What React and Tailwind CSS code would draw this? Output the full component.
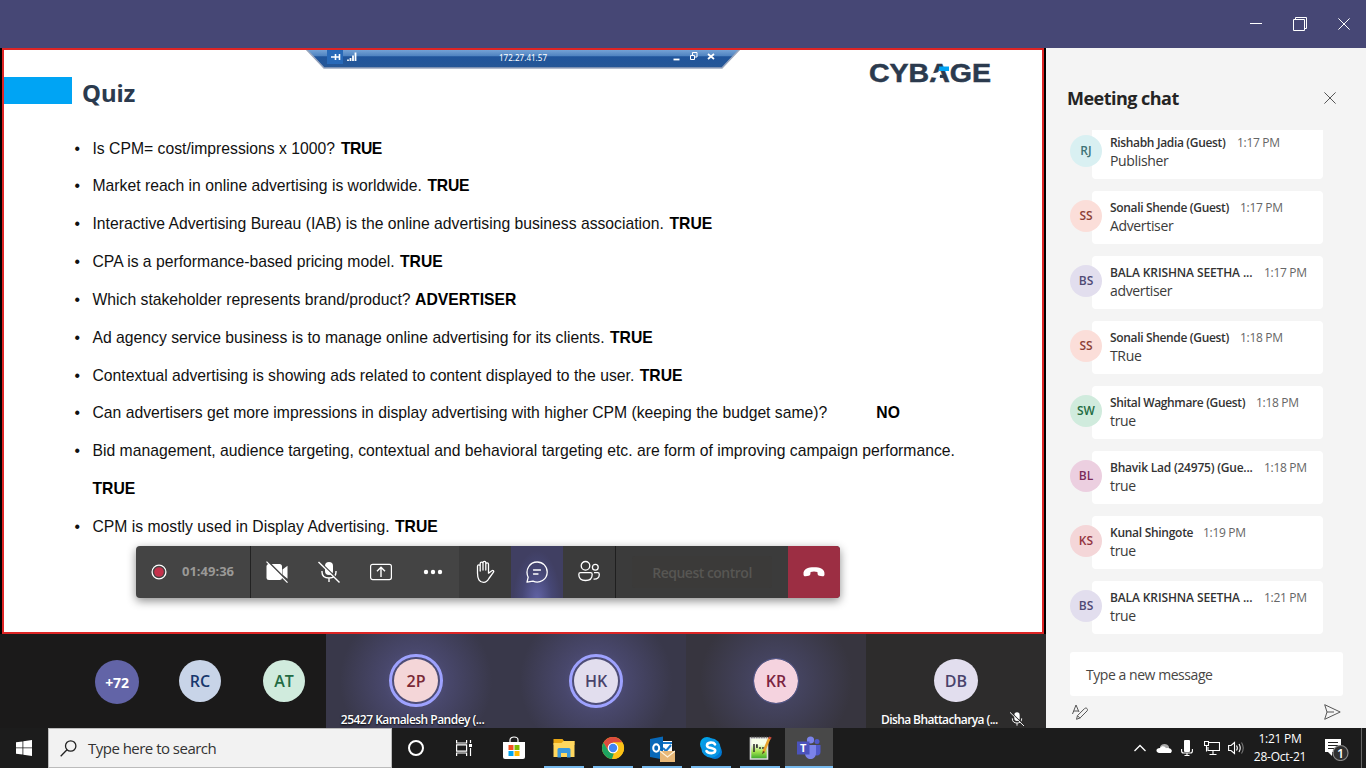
import React from "react";

const QUIZ = [
  ["Is CPM= cost/impressions x 1000?", "TRUE", "ml-[6px] tracking-[-0.5px]"],
  ["Market reach in online advertising is worldwide.", "TRUE", "ml-[5.500px] tracking-[-0.2px]"],
  ["Interactive Advertising Bureau (IAB) is the online advertising business association.", "TRUE", "ml-[5.500px]"],
  ["CPA is a performance-based pricing model.", "TRUE", "ml-[5.500px]"],
  ["Which stakeholder represents brand/product?", "ADVERTISER", "ml-[4.500px]"],
  ["Ad agency service business is to manage online advertising for its clients.", "TRUE", "ml-[5.500px]"],
  ["Contextual advertising is showing ads related to content displayed to the user.", "TRUE", "ml-[5.500px]"],
  ["Can advertisers get more impressions in display advertising with higher CPM (keeping the budget same)?", "NO", "ml-[49px]"],
  ["Bid management, audience targeting, contextual and behavioral targeting etc. are form of improving campaign performance.", "TRUE", "block"],
  ["CPM is mostly used in Display Advertising.", "TRUE", "ml-[5.500px]"],
];

const CHAT = [
  ["RJ", "Rishabh Jadia (Guest)", "1:17 PM", "Publisher", "bg-[#d9f0f2] text-[#3f7376]", "w-[116px] tracking-[-0.34px]"],
  ["SS", "Sonali Shende (Guest)", "1:17 PM", "Advertiser", "bg-[#fbded9] text-[#8d4237]", "w-[119px] tracking-[-0.34px]"],
  ["BS", "BALA KRISHNA SEETHA ...", "1:17 PM", "advertiser", "bg-[#e2deee] text-[#4f4a75]", "w-[143px] tracking-[-0.12px]"],
  ["SS", "Sonali Shende (Guest)", "1:18 PM", "TRue", "bg-[#fbded9] text-[#8d4237]", "w-[119px] tracking-[-0.34px]"],
  ["SW", "Shital Waghmare (Guest)", "1:18 PM", "true", "bg-[#d0ebdd] text-[#236b43]", "w-[135px] tracking-[-0.36px]"],
  ["BL", "Bhavik Lad (24975) (Gue...", "1:18 PM", "true", "bg-[#eccfe0] text-[#7b2b5a]", "w-[143px] tracking-[-0.22px]"],
  ["KS", "Kunal Shingote", "1:19 PM", "true", "bg-[#f4d6d8] text-[#933540]", "w-[82px] tracking-[-0.28px]"],
  ["BS", "BALA KRISHNA SEETHA ...", "1:21 PM", "true", "bg-[#e2deee] text-[#4f4a75]", "w-[143px] tracking-[-0.12px]"],
];

function Message({ m }) {
  return (
    <div className="flex h-[65px] shrink-0">
      <div className={`relative z-10 mt-[18px] flex h-8 w-8 shrink-0 items-center justify-center rounded-full text-[12px] font-semibold ${m[4]}`}>{m[0]}</div>
      <div className="-ml-[10px] mt-[9px] h-[53px] w-[231px] rounded-[4px] bg-white pl-[18px] pt-[8px] whitespace-nowrap">
        <div className="flex h-[18px] items-center text-[12px] leading-[18px]">
          <span className={`shrink-0 font-semibold text-[#333] ${m[5]}`}>{m[1]}</span>
          <span className="ml-[11px] tracking-[-0.3px] text-[#666]">{m[2]}</span>
        </div>
        <div className="h-5 text-[14px] leading-[17px] tracking-[-0.35px] text-[#3b3b3b]">{m[3]}</div>
      </div>
    </div>
  );
}

const MicOff = ({ className, cut = "#444" }) => (
  <svg className={className} viewBox="0 0 24 24" fill="none" stroke="#fff" strokeWidth="1.4">
    <rect x="8" y="2" width="8" height="13" rx="4" fill="#fff" stroke="none" />
    <path d="M5 11v1c0 4 3 6 7 6s7-2 7-6v-1M12 18v4" />
    <path d="M2.700 1.800l20 19.500" stroke={cut} strokeWidth="1.800" />
    <path d="M1.5 2l21 20.5" />
  </svg>
);

function Toolbar() {
  return (
    <div className="absolute left-[136px] top-[498px] z-20 flex h-[52px] w-[704px] overflow-hidden rounded-[4px] bg-[#444] shadow-[0_3px_10px_rgba(0,0,0,0.45)]">
      <div className="flex w-[115px] items-center border-r border-[#222] pl-[15px]">
        <svg className="h-4 w-4" viewBox="0 0 16 16"><circle cx="8" cy="8" r="6.9" fill="none" stroke="#fff" strokeWidth="1.3" /><circle cx="8" cy="8" r="4.8" fill="#c4314b" /></svg>
        <span className="ml-[15px] text-[13px] font-bold text-[#9a9997]">01:49:36</span>
      </div>
      <div className="flex w-[208px]">
        <div className="flex w-[52px] items-center justify-center">
          <svg className="h-6 w-6" viewBox="0 0 24 24"><rect x="1.500" y="4" width="15.500" height="16" rx="2.5" fill="#fff" /><path d="M17.5 9.5l5-3.700v13l-5-4z" fill="#fff" /><path d="M2.600 1.100l21 21" stroke="#444" strokeWidth="1.600" /><path d="M1.5 1.700l21 21" stroke="#fff" strokeWidth="1.2" /></svg>
        </div>
        <div className="flex w-[52px] items-center justify-center"><MicOff className="h-6 w-6" /></div>
        <div className="flex w-[52px] items-center justify-center">
          <svg className="h-6 w-6" viewBox="0 0 24 24" fill="none" stroke="#fff" strokeWidth="1.2"><rect x="1.6" y="4.4" width="20.8" height="15.2" rx="2" /><path d="M12 17V7.5M8 11.3l4-4 4 4" strokeWidth="1.4" /></svg>
        </div>
        <div className="flex w-[52px] items-center justify-center">
          <svg className="h-6 w-6" viewBox="0 0 24 24" fill="#fff"><circle cx="5" cy="12" r="2.200" /><circle cx="12" cy="12" r="2.200" /><circle cx="19" cy="12" r="2.200" /></svg>
        </div>
      </div>
      <div className="flex w-[157px] border-r border-[#1f1f1f] bg-[#3b3b3b]">
        <div className="flex w-[52px] items-center justify-center">
          <svg className="h-6 w-6" viewBox="0 0 24 24" fill="none" stroke="#fff" strokeWidth="1.3" strokeLinecap="round" strokeLinejoin="round"><path d="M4.5 13V6.2c0-1.8 2.7-1.8 2.7 0V11M7.2 10V3.4c0-1.8 2.8-1.8 2.8 0V10M10 9V2.8c0-1.8 2.8-1.8 2.8 0V10M12.8 10V4.2c0-1.7 2.7-1.7 2.7 0v9l3.4-2.5c1.2-.8 2.4.4 1.6 1.5l-4.6 6.3c-1.3 2.6-2.9 3.8-5.3 3.8-4.3 0-6.1-3.5-6.1-9.3" /></svg>
        </div>
        <div className="flex w-[52px] items-center justify-center bg-[radial-gradient(ellipse_at_50%_105%,#6264a7_0%,#464775_40%,#403f62_65%)]">
          <svg className="h-6 w-6" viewBox="0 0 24 24" fill="none" stroke="#fff" strokeWidth="1.3" strokeLinecap="round" strokeLinejoin="round"><path d="M2 22.2l1.2-5C-.4 9.600 5 2 12.200 2c5.600 0 10 4.400 10 10 0 7.700-7.700 12-14.200 9.100zM8.500 10h7M8.500 14h4.500" /></svg>
        </div>
        <div className="flex w-[52px] items-center justify-center">
          <svg className="h-6 w-6" viewBox="0 0 24 24" fill="none" stroke="#fff" strokeWidth="1.3"><circle cx="8.500" cy="5.800" r="4.300" /><circle cx="18.300" cy="7.300" r="2.900" /><path d="M3.500 12.700h10c1 0 1.700.7 1.700 1.700 0 4-2.200 6.100-6.700 6.100s-6.700-2.100-6.700-6.100c0-1 .7-1.700 1.700-1.700zM17 12.700h3.700c1 0 1.600.7 1.600 1.700 0 3.300-1.900 5-5.800 4.700" /></svg>
        </div>
      </div>
      <div className="flex w-[172px] items-center justify-center bg-[#3b3b3b]">
        <div className="flex h-8 w-[140px] items-center justify-center rounded-[3px] bg-[#3b3a39] text-[14px] font-semibold tracking-[-0.5px] text-[#575653]">Request control</div>
      </div>
      <div className="flex w-[52px] items-center justify-center bg-[#9c2e43]">
        <svg className="h-6 w-6" viewBox="0 0 24 24"><path d="M1.500 14.500C1 8.900 6 7.300 12 7.300s11 1.600 10.500 7.200c-.1 1.500-.9 1.900-2.200 1.700l-3-.5c-1.200-.2-1.600-1-1.700-2l-.2-1.800c-2.400-.7-4.400-.7-6.800 0l-.2 1.800c-.1 1-.5 1.800-1.700 2l-3 .5c-1.300.2-2.100-.2-2.200-1.700z" fill="#fff" /></svg>
      </div>
    </div>
  );
}

function Slide() {
  return (
    <div className="relative ml-[2px] h-[586px] w-[1042px] overflow-hidden border-2 border-[#dd2525] bg-white">
      <div className="flex h-[20px] justify-center">
        <svg className="-ml-[1px] h-[20px] w-[440px] shrink-0" viewBox="0 0 440 20">
          <defs><linearGradient id="rdp" x1="0" y1="0" x2="0" y2="1"><stop offset="0" stopColor="#7ba7d8" /><stop offset=".38" stopColor="#4e82c0" /><stop offset=".4" stopColor="#20559c" /><stop offset="1" stopColor="#265796" /></linearGradient></defs>
          <path d="M3 -1h434l-18 19H21z" fill="url(#rdp)" stroke="#9aa6bd" strokeWidth="1.500" />
          <rect x="24" y="0" width="16" height="14" fill="#2869b8" />
          <path d="M28 7h4M32.500 4v6M32.500 7h4M36.500 4v6" stroke="#fff" strokeWidth="1.600" fill="none" />
          <path d="M45 11V9.500M47.500 11V8M50 11V5.500M52.500 11V2.500" stroke="#fff" strokeWidth="1.800" />
          <text x="220" y="11" textAnchor="middle" fill="#fff" fontSize="9" textLength="48" lengthAdjust="spacingAndGlyphs" fontFamily="Noto Sans">172.27.41.57</text>
          <path d="M370.500 9.500h6" stroke="#fff" strokeWidth="1.800" />
          <path d="M387.500 5.500h4v4h-4zM389.500 5V2.500h4.500v4.500h-2" stroke="#fff" fill="none" />
          <path d="M405 4l6 5M411 4l-6 5" stroke="#fff" strokeWidth="1.800" />
        </svg>
      </div>
      <div className="flex h-[65px]">
        <div className="mt-[7px] h-[27px] w-[68px] bg-[#00a4f4]" />
        <h1 className="ml-[10px] mt-[5px] font-['Noto_Sans','Open_Sans',sans-serif] text-[24px] font-bold leading-[36px] tracking-[-0.1px] text-[#2b3a4e]">Quiz</h1>
        <svg className="-mt-[10px] ml-auto mr-[48px] h-[26px] w-[127px]" viewBox="0 0 127 26">
          <text x="2" y="21.500" fontFamily="Liberation Sans" fontWeight="700" fontSize="25" textLength="122" lengthAdjust="spacingAndGlyphs" fill="#2b3a4e" stroke="#2b3a4e" strokeWidth="0.500">CYBAGE</text>
          <path d="M64 14l8-2 1 6h-3l-7-1z" fill="#fff" />
          <path d="M66 13h7v3h-5z" fill="#fff" />
          <path d="M72 6.500h10v4.500H72z" fill="#00a4f4" />
        </svg>
      </div>
      <ul className="ml-[70.500px] mt-[-5.500px] font-['Liberation_Sans',sans-serif] text-[15.730px] leading-[37.850px] text-[#111]">
        {QUIZ.map((q, i) => (
          <li key={i} className="flex whitespace-nowrap">
            <span className="w-[18px] shrink-0">•</span>
            <div><span>{q[0]}</span><b className={`text-black ${q[2]}`}>{q[1]}</b></div>
          </li>
        ))}
      </ul>
    </div>
  );
}

function Participants() {
  const ring = "outline-3 outline-offset-2 outline-[#9ea2ff]";
  return (
    <div className="flex h-[94px] w-[1046px] bg-[#1b1a1a]">
      <div className="flex w-[326px] pl-[95px] pt-[26px]">
        <div className="flex h-11 w-11 items-center justify-center rounded-full bg-[#6264a7] text-[14px] font-bold tracking-[-0.1px] text-white">+72</div>
        <div className="ml-[40px] flex h-[42px] w-[42px] items-center justify-center rounded-full bg-[#c8d4e8] text-[16px] font-semibold text-[#17376d]">RC</div>
        <div className="ml-[42px] flex h-[42px] w-[42px] items-center justify-center rounded-full bg-[#d0ebdd] text-[16px] font-semibold text-[#236b43]">AT</div>
      </div>
      <div className="flex w-[180px] flex-col items-center bg-[radial-gradient(circle_at_50%_50%,#5b5b91_0%,#48476b_32%,#39384a_75%)] pt-[25px]">
        <div className={`flex h-11 w-11 items-center justify-center rounded-full bg-[#f4d6d8] text-[16px] font-semibold text-[#7a2936] ${ring}`}>2P</div>
        <div className="mt-[9px] -ml-[7px] text-[12px] font-semibold leading-[17px] tracking-[-0.52px] whitespace-nowrap text-white [text-shadow:0_1px_2px_#000]">25427 Kamalesh Pandey (...</div>
      </div>
      <div className="flex w-[180px] justify-center bg-[radial-gradient(circle_at_50%_50%,#5b5b91_0%,#48476b_32%,#39384a_75%)] pt-[25px]">
        <div className={`flex h-11 w-11 items-center justify-center rounded-full bg-[#e2deee] text-[16px] font-semibold text-[#49436b] ${ring}`}>HK</div>
      </div>
      <div className="flex w-[180px] justify-center bg-[radial-gradient(circle_at_50%_50%,#4a4a6e_0%,#42415a_32%,#37353f_75%)] pt-[25px]">
        <div className="flex h-11 w-11 items-center justify-center rounded-full bg-[#f5d3df] text-[16px] font-semibold text-[#7b2441] outline-1 outline-[#55598b]">KR</div>
      </div>
      <div className="flex w-[180px] flex-col items-center bg-[#2d2c2c] pt-[25px]">
        <div className="flex h-11 w-11 items-center justify-center rounded-full bg-[#e2deee] text-[16px] font-semibold text-[#49436b]">DB</div>
        <div className="mt-[9px] flex w-full pl-[15px] text-[12px] font-semibold leading-[17px] tracking-[-0.6px] whitespace-nowrap text-white">
          <span className="w-[120px]">Disha Bhattacharya (...</span><MicOff className="ml-[8px] h-4 w-4" cut="#2d2c2c" />
        </div>
      </div>
    </div>
  );
}

function AppIcon({ children }) {
  return (
    <div className="mr-[9px] flex w-10 flex-col items-center">
      <div className="flex h-[38px] items-center pt-[2px]">{children}</div>
      <div className="h-[2px] w-full bg-[#76b9ed]" />
    </div>
  );
}

function Taskbar() {
  return (
    <div className="flex h-10 w-full bg-[#1c1c1c] text-white">
      <div className="flex w-12 items-center justify-center"><svg className="h-4 w-4" viewBox="0 0 16 16" fill="#fff"><path d="M0 2.300L6.500 1.400v6.100H0zM7.300 1.300L16 0v7.500H7.300zM0 8.300h6.500v6.300L0 13.700zM7.300 8.300H16V16l-8.700-1.300z" /></svg></div>
      <div className="flex w-[344px] items-center border border-[#bbb] bg-[#f2f2f2] pl-[11px]">
        <svg className="h-[17px] w-[17px]" viewBox="0 0 17 17" fill="none" stroke="#222" strokeWidth="1.300"><circle cx="10.700" cy="6" r="5.200" /><path d="M7 9.800L.7 16.200" /></svg>
        <span className="ml-[11px] text-[15px] tracking-[-0.52px] text-[#333]">Type here to search</span>
      </div>
      <div className="flex w-12 items-center justify-center"><i className="h-4 w-4 rounded-full border-2 border-white" /></div>
      <div className="flex w-12 items-center justify-center"><svg className="h-4 w-4" viewBox="0 0 16 16" fill="none" stroke="#fff" strokeWidth="1.200"><path d="M.6 0v3h10V0M.6 16v-3h10v3M.6 4.800h10v6.400H.6zM14.500 0v3M14.500 8v8" /><path d="M13 4h3v3h-3z" fill="#fff" stroke="none" /></svg></div>
      <div className="mr-[6px] flex w-[50px] items-center justify-center pl-[2px]"><svg className="h-6 w-6" viewBox="0 0 24 24"><path d="M8 6V4c0-4 8-4 8 0v2" fill="none" stroke="#fff" strokeWidth="1.200" /><path d="M1 6h22v15q0 2-2 2H3q-2 0-2-2z" fill="#fff" /><path d="M6.500 9h5v5h-5z" fill="#f25022" /><path d="M12.500 9h5v5h-5z" fill="#7fba00" /><path d="M6.500 15h5v5h-5z" fill="#00a4ef" /><path d="M12.500 15h5v5h-5z" fill="#ffb900" /></svg></div>
      <AppIcon>
        <svg className="h-6 w-6" viewBox="0 0 24 24"><path d="M1.500 3h9l1.500 2H22.500v4h-21z" fill="#e8a613" /><path d="M1.500 7h8l2-2h11v16h-21z" fill="#ffd75e" /><path d="M5.500 21.500v-8q0-1.500 1.500-1.500h10q1.500 0 1.500 1.500v8h-3.500v-4.500h-6v4.500z" fill="#3a98dc" /></svg>
      </AppIcon>
      <AppIcon>
        <svg className="h-6 w-6" viewBox="0 0 24 24"><circle cx="12" cy="12" r="11" fill="#fbc117" /><path d="M2.500 6.500A11 11 0 0 1 21.500 6.500H12L7.200 14.700z" fill="#dd4b3e" /><path d="M2.500 6.500l4.800 8.200q2 3 5.500 2.800L11 23A11 11 0 0 1 2.500 6.500z" fill="#1da261" /><path d="M12 6.500h9.500A11 11 0 0 1 11 23l5.700-8.300z" fill="#fbc117" /><circle cx="12" cy="12" r="5.300" fill="#fff" /><circle cx="12" cy="12" r="4.200" fill="#4285f4" /></svg>
      </AppIcon>
      <AppIcon>
        <svg className="-mb-[2px] h-[26px] w-[26px]" viewBox="0 0 26 26"><path d="M12 5h11v13H12z" fill="#fff" /><path d="M12 6h11v2H12z" fill="#1778ca" /><path d="M14 12l3 3 5-6" fill="none" stroke="#1778ca" strokeWidth="2" /><path d="M1 3l13-2.500v23L1 21z" fill="#0868b8" /><ellipse cx="7.200" cy="12" rx="3" ry="3.700" fill="none" stroke="#fff" strokeWidth="2" /><path d="M11 15h15v11H11z" fill="#e7b777" /><path d="M11 15l7.500 6 7.500-6" fill="none" stroke="#fff3dc" strokeWidth="1.200" /></svg>
      </AppIcon>
      <AppIcon>
        <svg className="h-6 w-6" viewBox="0 0 24 24"><circle cx="8" cy="8" r="7" fill="#00a2e8" /><circle cx="16" cy="16" r="7" fill="#0078d4" /><circle cx="12" cy="12" r="9.700" fill="#0796e4" /><path d="M16 8.300C14.500 5.700 8 6 8 9.400c0 3.500 8.200 1.800 8.200 5.200 0 3.200-6.800 3.500-8.700.4" fill="none" stroke="#fff" strokeWidth="2.600" strokeLinecap="round" /></svg>
      </AppIcon>
      <AppIcon>
        <svg className="h-6 w-6" viewBox="0 0 24 24"><defs><linearGradient id="pad" x1="0" y1="0" x2="0" y2="1"><stop offset=".3" stopColor="#f7ffe9" /><stop offset=".65" stopColor="#a4e34d" /><stop offset="1" stopColor="#38a52a" /></linearGradient></defs><path d="M2.500 2h17v21h-17z" fill="url(#pad)" stroke="#ddd" strokeWidth="1.600" /><path d="M3 1.500h16" stroke="#777" strokeWidth="1.500" strokeDasharray="1.500 1" /><path d="M6 8v8M8 9h1v3M11 12h2M14 12h3" stroke="#333" strokeWidth="1.600" /><path d="M21.500 2l-6 14" stroke="#e9a32c" strokeWidth="2.600" /><path d="M22.500 1l-1 2" stroke="#c4483b" strokeWidth="2.600" /><path d="M15 15l-1.200 3.500L17 16z" fill="#5b4020" /></svg>
      </AppIcon>
      <div className="-ml-[4px] flex w-12 flex-col items-center bg-[#484848]">
        <div className="flex h-[38px] items-center pt-[2px]">
          <svg className="h-6 w-6" viewBox="0 0 24 24"><circle cx="20" cy="5.500" r="2.500" fill="#5059c9" /><circle cx="13.500" cy="4" r="3.600" fill="#7b83eb" /><path d="M17 9h6.500v7c0 4-5 5-6.500 1z" fill="#5059c9" /><path d="M8 9h11v8c0 8-11 8-11 0z" fill="#7b83eb" /><path d="M0 5.500h12.500v13H0z" fill="#4b53bc" /><text x="6.200" y="16" fontFamily="Open Sans" fontWeight="700" fontSize="11" textAnchor="middle" fill="#fff">T</text></svg>
        </div>
        <div className="h-[2px] w-full bg-[#76b9ed]" />
      </div>
      <div className="ml-auto flex items-center">
        <svg className="h-3 w-3" viewBox="0 0 12 12"><path d="M.5 9L6 3.500 11.500 9" fill="none" stroke="#fff" strokeWidth="1.300" /></svg>
        <svg className="ml-[10px] h-4 w-4" viewBox="0 0 16 16"><path d="M4 7c1-4 8-4 9 0v4H4z" fill="#aaa" /><path d="M3 13c-4-1-3-5 1-5 2-3 5-2 6 .3 3-1 7 1 5.500 3.700-.5 1-1 1-2 1z" fill="#fff" /></svg>
        <svg className="ml-[9px] h-4 w-3" viewBox="0 0 12 16"><rect x="3" y="0" width="6" height="12" rx="1" fill="#fff" /><path d="M.6 9v2q0 2 2 2h6.800q2 0 2-2V9M6 13v2.500M3.500 15.500h5" fill="none" stroke="#fff" strokeWidth="1.100" /></svg>
        <svg className="ml-[11px] h-4 w-4" viewBox="0 0 16 16" fill="none" stroke="#fff" strokeWidth="1.100"><path d="M5 2.500h10.500v8H4V7M9 10.500V14M5.500 14.500h7M.5 1.500h4v4h-4zM2.500 5.500v6" /></svg>
        <svg className="ml-[8px] h-4 w-4" viewBox="0 0 16 16" fill="none" stroke="#fff" strokeWidth="1.100"><path d="M.6 5.500H3l3.500-3v11l-3.500-3H.6zM8.500 5.500q1.700 2.500 0 5M11 4q2.500 4 0 8" /><path d="M13.500 2.500q3.500 5.500 0 11" stroke="#777" /></svg>
        <div className="ml-[7px] flex w-[58px] flex-col items-center text-[12px] leading-[18px] tracking-[-0.25px] whitespace-nowrap"><span>1:21 PM</span><span>28-Oct-21</span></div>
        <svg className="ml-[15px] h-[26px] w-[26px]" viewBox="0 0 26 26"><path d="M1 4h16v13H8v4l-4-4H1z" fill="#fff" /><path d="M4 7.500h10M4 10.500h10M4 13.500h6" stroke="#222" strokeWidth="1.100" /><circle cx="16.500" cy="18" r="7.500" fill="#303030" stroke="#888" strokeWidth="1.200" /><text x="16.500" y="22.500" textAnchor="middle" fontSize="12.500" fontFamily="Open Sans" fontWeight="600" fill="#fff">1</text></svg>
        <i className="ml-[11px] mr-[4px] h-10 w-px bg-[#666]" />
      </div>
    </div>
  );
}

export default function App() {
  return (
    <div className="flex h-[768px] w-[1366px] flex-col overflow-hidden bg-black font-['Open_Sans','Noto_Sans',sans-serif]">
      <div className="flex h-12 shrink-0 items-center justify-end bg-[#464775] pr-[16px]">
        <svg className="h-4 w-3" viewBox="0 0 12 16"><path d="M0 7.500h12" stroke="#fff" /></svg>
        <svg className="ml-[31px] h-4 w-[14px]" viewBox="0 0 14 16" fill="none" stroke="#fff"><path d="M.5 3.500h11v11H.5zM2.500 3.500v-2h11v11h-2" /></svg>
        <svg className="ml-[31px] h-3 w-3" viewBox="0 0 12 12"><path d="M.4.4l11.200 11.200M11.600.4L.4 11.600" stroke="#fff" /></svg>
      </div>
      <div className="flex h-[680px] shrink-0">
        <div className="relative w-[1046px]"><Slide /><Participants /><Toolbar /></div>
        <div className="flex w-[320px] flex-col bg-[#f4f4f4]">
          <div className="mt-[37px] flex items-center justify-between pl-[21px] pr-[30px] text-[18px] font-bold leading-[26px] tracking-[-0.52px] text-[#242424]">
            <h2>Meeting chat</h2>
            <svg className="h-3 w-3" viewBox="0 0 12 12"><path d="M.4.4l11.200 11.200M11.600.4L.4 11.600" stroke="#555" /></svg>
          </div>
          <div className="mt-[19px] flex h-[506px] flex-col overflow-hidden pl-6"><div className="-mt-[13px]">{CHAT.map((m, i) => <Message key={i} m={m} />)}</div></div>
          <div className="ml-6 mt-4 flex h-11 w-[273px] items-center rounded-[3px] bg-white pl-4 text-[14px] tracking-[-0.45px] text-[#484644]">Type a new message</div>
          <div className="mt-2 flex justify-between pl-[26px] pr-[25px]">
            <svg className="h-4 w-4" viewBox="0 0 16 16" fill="none" stroke="#555" strokeWidth="1"><path d="M.5 10L4 1l3 7M1.800 7h4.500M4.500 15.300l1-3.700 7-7c1.800-1.600 4 .7 2.600 2.300l-7 7zM5.500 11.700l2.500 2.500" /></svg>
            <svg className="h-4 w-[17px]" viewBox="0 0 17 16" fill="none" stroke="#555" strokeWidth="1"><path d="M.7.7L16.200 8 .7 15.300 3 8zM3 8h7" strokeLinejoin="round" /></svg>
          </div>
        </div>
      </div>
      <Taskbar />
    </div>
  );
}
